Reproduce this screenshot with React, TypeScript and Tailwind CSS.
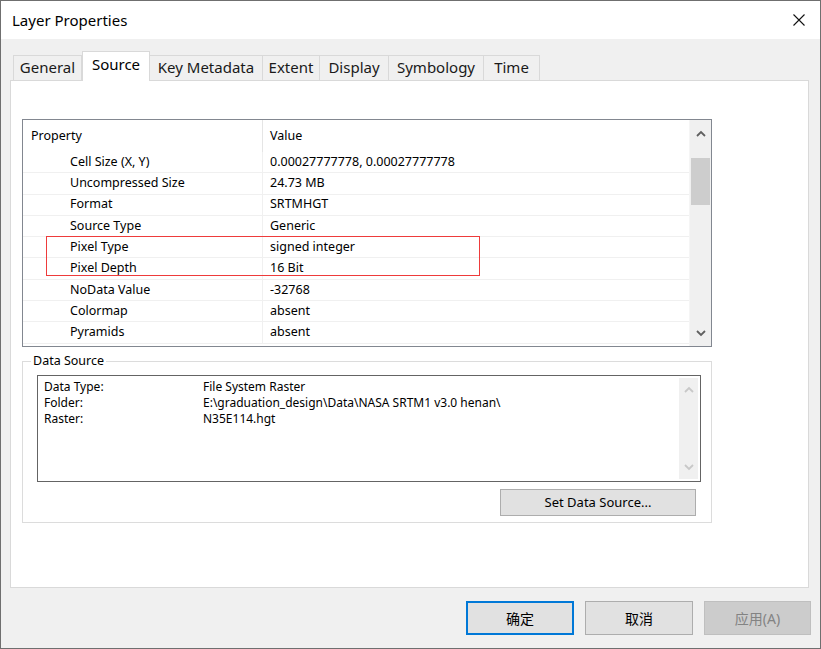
import React from 'react';

const font = { fontFamily: '"Noto Sans", "Noto Sans CJK SC", sans-serif' };

const tabs = [
  { label: 'General', w: 'w-[69px]' },
  { label: 'Source', w: 'w-[68px]', active: true },
  { label: 'Key Metadata', w: 'w-[114px]' },
  { label: 'Extent', w: 'w-[58px]' },
  { label: 'Display', w: 'w-[70px]' },
  { label: 'Symbology', w: 'w-[96px]' },
  { label: 'Time', w: 'w-[57px]' },
];

const rows: [string, string][] = [
  ['Cell Size (X, Y)', '0.00027777778, 0.00027777778'],
  ['Uncompressed Size', '24.73 MB'],
  ['Format', 'SRTMHGT'],
  ['Source Type', 'Generic'],
  ['Pixel Type', 'signed integer'],
  ['Pixel Depth', '16 Bit'],
  ['NoData Value', '-32768'],
  ['Colormap', 'absent'],
  ['Pyramids', 'absent'],
];

const Chevron = ({ up, color = '#606060' }: { up?: boolean; color?: string }) => (
  <svg width="10" height="7" viewBox="0 0 10 7">
    <path
      d={up ? 'M1 6 L5 2 L9 6' : 'M1 1 L5 5 L9 1'}
      fill="none"
      stroke={color}
      strokeWidth="1.8"
    />
  </svg>
);

export default function App() {
  return (
    <div
      className="w-[821px] h-[649px] border border-[#6f6f6f] bg-[#f0f0f0] flex flex-col overflow-hidden text-[#000]"
      style={font}
    >
      {/* Title bar */}
      <div className="h-[38px] bg-white flex items-center justify-between pl-[11px] pr-[15px] shrink-0">
        <span className="text-[15px]">Layer Properties</span>
        <svg width="12" height="12" viewBox="0 0 12 12">
          <path d="M0.5 0.5 L11.5 11.5 M11.5 0.5 L0.5 11.5" stroke="#111" strokeWidth="1.1" />
        </svg>
      </div>

      <div className="flex-1 flex flex-col pl-[9px] pr-[11px] pt-[12px]">
        {/* Tabs */}
        <div className="h-[29px] flex items-end pl-[3px] shrink-0">
          {tabs.map((t) =>
            t.active ? (
              <div
                key={t.label}
                className={`${t.w} h-[30px] -mb-px bg-white border border-[#d9d9d9] border-b-0 flex items-center justify-center text-[15px] z-10 pb-[4px]`}
              >
                {t.label}
              </div>
            ) : (
              <div
                key={t.label}
                className={`${t.w} h-[25px] bg-[#f0f0f0] border border-[#d9d9d9] border-b-0 -ml-px first:ml-0 flex items-center justify-center text-[15px] text-[#1a1a1a] pb-[1px]`}
              >
                {t.label}
              </div>
            ),
          )}
        </div>

        {/* Tab panel */}
        <div className="h-[508px] bg-white border border-[#d9d9d9] pl-[11px] pr-[96px] pt-[38px] flex flex-col">
          {/* Property list */}
          <div className="relative h-[228px] border border-[#828790] flex text-[12.5px]">
            <div className="flex-1 flex flex-col">
              <div className="h-[32px] flex items-center shrink-0">
                <div className="w-[240px] h-full pl-[8px] flex items-center border-r border-[#e5e5e5]">Property</div>
                <div className="pl-[7px]">Value</div>
              </div>
              {rows.map(([k, v]) => (
                <div key={k} className="h-[21.3px] flex items-center border-b border-[#f0f0f0] shrink-0">
                  <div className="w-[240px] h-full pl-[47px] flex items-center border-r border-[#f0f0f0]">{k}</div>
                  <div className="pl-[7px]">{v}</div>
                </div>
              ))}
            </div>
            <div className="w-[22px] bg-[#f0f0f0] border-l border-[#f5f5f5] flex flex-col items-center">
              <div className="h-[27px] flex items-center justify-center">
                <Chevron up />
              </div>
              <div className="mt-[11px] w-[19px] h-[47px] bg-[#cdcdcd]" />
              <div className="flex-1" />
              <div className="h-[25px] flex items-center justify-center">
                <Chevron />
              </div>
            </div>
            <div className="absolute left-[23px] top-[116px] w-[434px] h-[40px] border border-[#ee3b3b]" />
          </div>

          {/* Data Source group */}
          <div className="relative mt-[14px] h-[162px] border border-[#dcdcdc] pl-[14px] pr-[10px] pt-[13px] flex flex-col">
            <span className="absolute -top-[9px] left-[8px] bg-white px-[2px] text-[12.5px] leading-[16px]">
              Data Source
            </span>
            <div className="h-[107px] border border-[#646464] flex text-[12px] leading-[16px]">
              <div className="flex-1 pl-[6px] pt-[3px]">
                <div className="flex">
                  <span className="w-[159px]">Data Type:</span>
                  <span>File System Raster</span>
                </div>
                <div className="flex">
                  <span className="w-[159px]">Folder:</span>
                  <span>E:\graduation_design\Data\NASA SRTM1 v3.0 henan\</span>
                </div>
                <div className="flex">
                  <span className="w-[159px]">Raster:</span>
                  <span>N35E114.hgt</span>
                </div>
              </div>
              <div className="w-[19px] my-[2px] mr-[2px] bg-[#f0f0f0] flex flex-col items-center justify-between py-[8px]">
                <Chevron up color="#c8c8c8" />
                <Chevron color="#c8c8c8" />
              </div>
            </div>
            <div className="flex justify-end mt-[7px]">
              <button className="w-[196px] h-[27px] bg-[#e1e1e1] border border-[#adadad] text-[13px] flex items-center justify-center mr-[5px]">
                Set Data Source...
              </button>
            </div>
          </div>
        </div>

        {/* Bottom buttons */}
        <div className="flex justify-end gap-[11px] mt-[13px]">
          <button className="w-[108px] h-[34px] bg-[#e1e1e1] border-2 border-[#0078d7] text-[14px] flex items-center justify-center">
            确定
          </button>
          <button className="w-[108px] h-[34px] bg-[#e1e1e1] border border-[#adadad] text-[14px] flex items-center justify-center">
            取消
          </button>
          <button className="w-[107px] h-[34px] bg-[#cccccc] border border-[#bfbfbf] text-[14px] text-[#838383] flex items-center justify-center -mr-[2px]">
            应用(A)
          </button>
        </div>
      </div>
    </div>
  );
}
